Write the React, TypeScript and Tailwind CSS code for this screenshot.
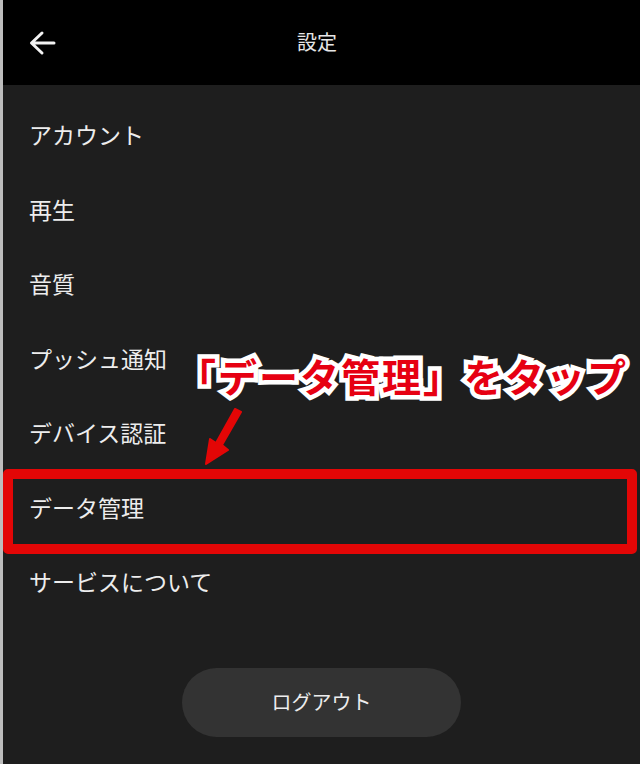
import React from 'react';

const items = ['アカウント', '再生', '音質', 'プッシュ通知', 'デバイス認証', 'データ管理', 'サービスについて'];

const App: React.FC = () => {
  return (
    <div className="relative w-[640px] h-[764px] overflow-hidden bg-[#1e1e1e] text-[#ededed] font-['Noto_Sans_CJK_JP','Noto_Sans',sans-serif] border-l-[3px] border-[#bdbdbd]">
      {/* Header */}
      <div className="relative h-[85px] bg-black flex items-center justify-center">
        <svg className="absolute left-[25px] top-[30px]" width="28" height="26" viewBox="0 0 28 26" fill="none">
          <path d="M26 13H4M14 3L3.5 13L14 23" stroke="#f2f2f2" strokeWidth="3" strokeLinecap="round" strokeLinejoin="round" />
        </svg>
        <span className="text-[20px] text-[#e6e6e6] mr-[9px] mt-[-1px]">設定</span>
      </div>

      {/* Menu */}
      <div className="flex flex-col pt-[12px]">
        {items.map((t, i) => (
          <div key={i} className="h-[74.5px] flex items-center pl-[26px] text-[23px]">
            {t}
          </div>
        ))}
      </div>

      {/* Logout */}
      <div className="flex justify-center mt-[49px] pr-[1px]">
        <button className="w-[279px] h-[69px] rounded-full bg-[#333333] text-[20px] text-[#ededed] ml-[1px]">
          ログアウト
        </button>
      </div>

      {/* Highlight box */}
      <div className="absolute left-[0px] top-[469px] w-[634px] h-[85px] border-[10px] border-[#e30606] rounded-[5px]" />

      {/* Annotation */}
      <div className="absolute left-[174px] top-[356px] text-[39px] font-bold leading-none text-[#e60012] tracking-[2px] [paint-order:stroke_fill] [-webkit-text-stroke:9px_#ffffff] whitespace-nowrap">
        「データ管理」をタップ
      </div>

      {/* Arrow */}
      <svg className="absolute left-[198px] top-[408px]" width="46" height="60" viewBox="0 0 46 60">
        <path d="M40 4 L21 37 L27 42 L5 56 L9 31 L15 35 L34 1 Z" fill="#e30606" strokeLinejoin="round" stroke="#e30606" strokeWidth="2" />
      </svg>
    </div>
  );
};

export default App;
